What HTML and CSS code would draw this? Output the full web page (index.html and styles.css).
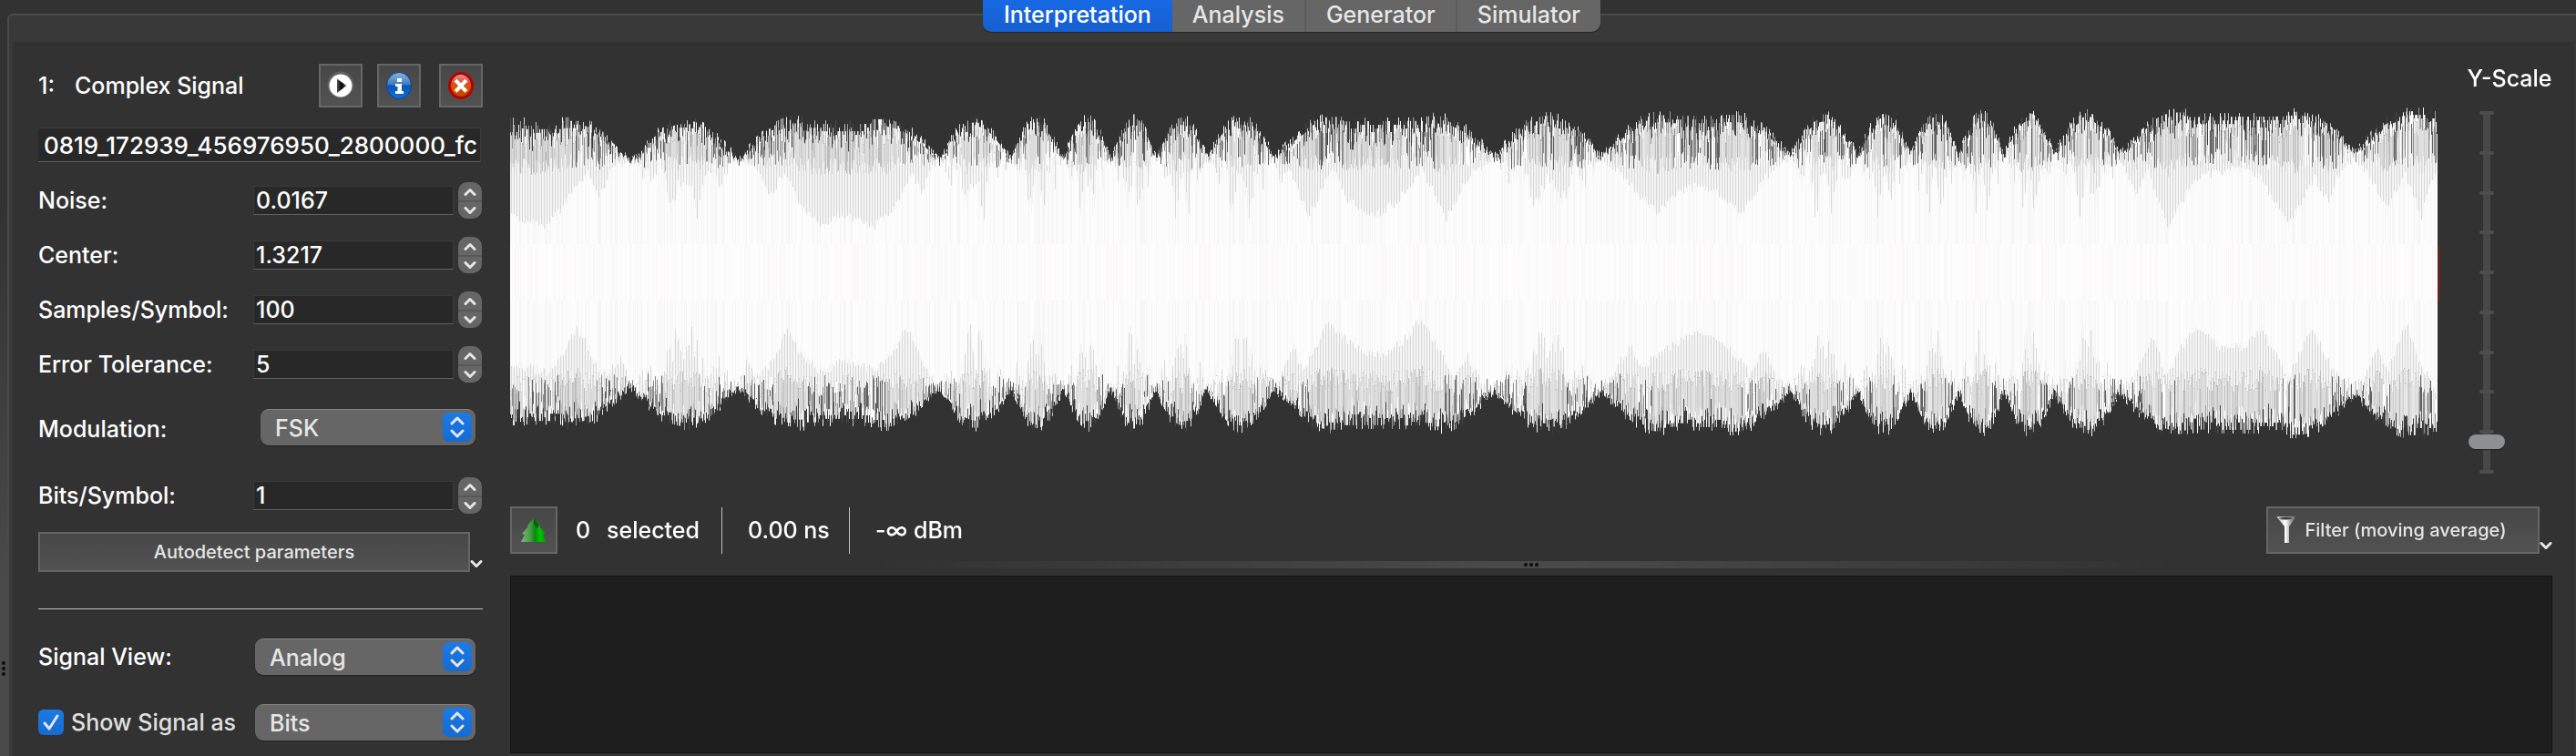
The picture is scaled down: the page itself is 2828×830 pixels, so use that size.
FILE: index.html
```html
<!DOCTYPE html>
<html lang="en">
<head>
<meta charset="utf-8">
<title>Signal interpretation</title>
<link rel="stylesheet" href="styles.css">
</head>
<body>
<div class="window">
  <div class="edge-splitter"><span class="dots dots-vertical"><i></i><i></i><i></i></span></div>
  <div class="workspace">
    <nav class="tabs">
      <button class="tab tab-active">Interpretation</button>
      <button class="tab">Analysis</button>
      <button class="tab tab-divided">Generator</button>
      <button class="tab tab-divided">Simulator</button>
    </nav>
    <div class="pane">
      <div class="content">
        <aside class="params">
          <div class="signal-head">
            <span class="signal-number">1:</span>
            <span class="signal-kind">Complex Signal</span>
            <button class="icon-button" aria-label="Play">
              <svg width="30" height="32" viewBox="0 0 30 32"><defs><linearGradient id="gp"><stop stop-color="#555"/><stop offset=".5" stop-color="#000"/><stop offset="1" stop-color="#777"/></linearGradient></defs><circle cx="15" cy="15" r="14.500" fill="#777" opacity=".5"/><circle cx="15" cy="16" r="12.500" fill="#fff"/><path d="M11 8.500L21.500 16 11 24z" fill="url(#gp)"/></svg>
            </button>
            <button class="icon-button" aria-label="Details">
              <svg width="30" height="32" viewBox="0 0 30 32"><defs><linearGradient id="gi" x2="0" y2="1"><stop stop-color="#8ab4e2"/><stop offset=".45" stop-color="#3f7cc4"/><stop offset=".5" stop-color="#0b56b0"/><stop offset="1" stop-color="#0a6fe0"/></linearGradient></defs><ellipse cx="15" cy="16" rx="13.500" ry="14.500" fill="url(#gi)" stroke="#0b4594"/><path d="M13 8h5v4h-5zM11 14h7v8h2v3h-9v-3h2.500v-5H11z" fill="#fff"/></svg>
            </button>
            <button class="icon-button icon-button-close" aria-label="Close">
              <svg width="30" height="32" viewBox="0 0 30 32"><defs><linearGradient id="gc" x2="0" y2="1"><stop stop-color="#e89a9a"/><stop offset=".4" stop-color="#d0503c"/><stop offset=".5" stop-color="#d85a00"/><stop offset="1" stop-color="#c04000"/></linearGradient></defs><ellipse cx="15" cy="16" rx="12.500" ry="13.500" fill="url(#gc)" stroke="#b80000" stroke-width="3"/><path d="M10.500 11.500l9 9.500M19.500 11.500L10.500 21" stroke="#fff" stroke-width="4" stroke-linecap="square"/></svg>
            </button>
          </div>
          <input class="field filename" type="text" aria-label="Signal name" value="0819_172939_456976950_2800000_fc">
          <div class="row"><label for="noise">Noise:</label><input class="field" id="noise" type="text" value="0.0167"><span class="spinner"><button aria-label="Increase noise"><svg viewBox="0 0 14 8"><path d="M2 7l5-5 5 5"/></svg></button><button aria-label="Decrease noise"><svg viewBox="0 0 14 8"><path d="M2 1l5 5 5-5"/></svg></button></span></div>
          <div class="row"><label for="center">Center:</label><input class="field" id="center" type="text" value="1.3217"><span class="spinner"><button aria-label="Increase center"><svg viewBox="0 0 14 8"><path d="M2 7l5-5 5 5"/></svg></button><button aria-label="Decrease center"><svg viewBox="0 0 14 8"><path d="M2 1l5 5 5-5"/></svg></button></span></div>
          <div class="row"><label for="samples">Samples/Symbol:</label><input class="field" id="samples" type="text" value="100"><span class="spinner"><button aria-label="Increase samples"><svg viewBox="0 0 14 8"><path d="M2 7l5-5 5 5"/></svg></button><button aria-label="Decrease samples"><svg viewBox="0 0 14 8"><path d="M2 1l5 5 5-5"/></svg></button></span></div>
          <div class="row"><label for="tolerance">Error Tolerance:</label><input class="field" id="tolerance" type="text" value="5"><span class="spinner"><button aria-label="Increase tolerance"><svg viewBox="0 0 14 8"><path d="M2 7l5-5 5 5"/></svg></button><button aria-label="Decrease tolerance"><svg viewBox="0 0 14 8"><path d="M2 1l5 5 5-5"/></svg></button></span></div>
          <div class="row row-modulation"><label for="modulation">Modulation:</label><span class="combo combo-inset"><select id="modulation"><option>FSK</option></select><svg class="combo-arrows" viewBox="0 0 32 32"><path d="M10 12l6-6 6 6M10 20l6 6 6-6"/></svg></span></div>
          <div class="row row-bits"><label for="bits">Bits/Symbol:</label><input class="field" id="bits" type="text" value="1"><span class="spinner"><button aria-label="Increase bits"><svg viewBox="0 0 14 8"><path d="M2 7l5-5 5 5"/></svg></button><button aria-label="Decrease bits"><svg viewBox="0 0 14 8"><path d="M2 1l5 5 5-5"/></svg></button></span></div>
          <div class="menu-button menu-button-wide"><button class="push">Autodetect parameters</button><svg class="menu-arrow" viewBox="0 0 14 8"><path d="M2 1l5 5 5-5"/></svg></div>
          <hr class="rule">
          <div class="row row-view"><label for="view">Signal View:</label><span class="combo"><select id="view"><option>Analog</option></select><svg class="combo-arrows" viewBox="0 0 32 32"><path d="M10 12l6-6 6 6M10 20l6 6 6-6"/></svg></span></div>
          <div class="row row-show"><label class="check-label"><span class="check"><input type="checkbox" checked><svg viewBox="0 0 28 28"><path d="M7 15l5 6 9-14"/></svg></span>Show Signal as</label><span class="combo"><select aria-label="Show signal as"><option>Bits</option></select><svg class="combo-arrows" viewBox="0 0 32 32"><path d="M10 12l6-6 6 6M10 20l6 6 6-6"/></svg></span></div>
        </aside>
        <main class="main">
          <div class="plot-row">
            <canvas class="plot" id="plot"></canvas>
            <div class="scale">
              <label for="yscale">Y-Scale</label>
              <div class="slider">
                <span class="ticks"><i></i><i></i><i></i><i></i><i></i><i></i><i></i><i></i><i></i><i></i></span>
                <input id="yscale" type="range" min="0" max="100" value="7">
              </div>
            </div>
          </div>
          <div class="status">
            <button class="icon-button icon-button-tree" aria-label="Show details">
              <svg width="28" height="28" viewBox="0 0 28 28"><defs><linearGradient id="gt"><stop stop-color="#7ab87a"/><stop offset=".35" stop-color="#4a9c4a"/><stop offset=".55" stop-color="#0a8a0a"/><stop offset=".75" stop-color="#00c400"/><stop offset="1" stop-color="#009000"/></linearGradient></defs><path d="M14 1l7 8-1 1 7 8-3 1 4 8H0l4-8-3-1 7-8-1-1z" fill="url(#gt)"/><path d="M14 1l6 8-3 3-3-5z" fill="#0a5a0a"/></svg>
            </button>
            <span class="count">0</span><span class="selected">selected</span>
            <span class="duration">0.00 ns</span>
            <span class="power">-∞ dBm</span>
            <div class="menu-button menu-button-filter"><button class="push"><svg width="24" height="32" viewBox="0 0 24 32"><defs><linearGradient id="gf"><stop stop-color="#aaa"/><stop offset=".45" stop-color="#fff"/><stop offset="1" stop-color="#444"/></linearGradient></defs><path d="M1 1h22l-8 11v18h-5V12z" fill="url(#gf)"/><ellipse cx="12" cy="3" rx="8" ry="1.500" fill="#333" stroke="#999"/></svg>Filter (moving average)</button><svg class="menu-arrow" viewBox="0 0 14 8"><path d="M2 1l5 5 5-5"/></svg></div>
          </div>
          <div class="splitter"><span class="dots"><i></i><i></i><i></i></span></div>
          <textarea class="output" aria-label="Demodulated data"></textarea>
        </main>
      </div>
    </div>
  </div>
</div>
<script src="plot.js"></script>
</body>
</html>
```
FILE: styles.css
```css
* { box-sizing: border-box; }

body {
  margin: 0;
  background: #323232;
  color: #fff;
  font: 500 25px/32px Inter, "Liberation Sans", sans-serif;
}

button, input, select, textarea { font: inherit; color: inherit; margin: 0; }
button { padding: 0; border: 0; background: none; }

.window { display: flex; min-height: 100vh; }

.edge-splitter {
  display: flex;
  width: 8px;
  padding: 726px 0 0 2px;
  background: linear-gradient(#323232 220px, #4a4a4a 640px, #4a4a4a);
}

.dots { display: flex; gap: 2px; height: 4px; }
.dots-vertical { flex-direction: column; height: auto; }
.dots i { width: 4px; height: 4px; border-radius: 2px; background: #0c0c0c; }

.workspace { flex: 1; display: flex; flex-direction: column; min-width: 0; }

.tabs {
  position: relative;
  align-self: center;
  display: flex;
  height: 35px;
  border-radius: 0 0 10px 10px;
  overflow: hidden;
  background: #666;
  box-shadow: 0 1px 1px #222;
}
.tab { padding: 0 22px 4px; color: #e6e6e6; }
.tab-active { padding: 0 23px 4px; color: #fff; background: linear-gradient(#1769e4, #165fd0); }
.tab-divided { border-left: 2px solid #5b5b5b; }

.pane {
  flex: 1;
  display: flex;
  margin-top: -20px;
  padding: 29px 2px 0 4px;
  border: 1px solid #4a4a4a;
  border-width: 2px 0 0 2px;
  border-radius: 6px 0 0 0;
  background: #393939;
}
.content { flex: 1; display: flex; gap: 30px; min-width: 0; padding: 0 24px 3px 28px; background: #323232; }

.params { width: 488px; display: flex; flex-direction: column; }
.signal-head { display: flex; align-items: center; height: 48px; margin-top: 24px; }
.signal-number { width: 40px; }
.signal-kind { flex: 1; }
.icon-button {
  display: grid;
  place-items: center;
  width: 48px;
  height: 48px;
  margin-left: 16px;
  border: 2px solid #666;
  background: linear-gradient(#474747, #525252);
}
.icon-button-close { margin-left: 20px; }

.field {
  min-width: 0;
  height: 32px;
  padding: 0 2px;
  border: 1px solid #3a3a3a;
  border-bottom-color: #606060;
  background: #282828;
  outline: 0;
}
.filename { height: 38px; margin: 22px 2px 22px 0; padding: 0 3px 0 0; border-left: 0; font-size: 26px; text-align: right; }

.row { display: grid; grid-template-columns: 236px 220px 26px; align-items: center; height: 40px; margin-bottom: 20px; }
.row .spinner { margin-left: 5px; }
.row-modulation, .row-view, .row-show { grid-template-columns: 238px 242px; }
.row-modulation { margin: 9px 0 35px; }
.row-modulation label { padding-top: 4px; }
.row-bits { margin-bottom: 20px; }
.row-view { margin-bottom: 32px; }
.row-show { margin-bottom: 0; }

.spinner { display: flex; flex-direction: column; width: 26px; height: 40px; border-radius: 10px; overflow: hidden; background: #666; }
.spinner button { display: grid; place-items: center; height: 20px; }
.spinner button + button { border-top: 2px solid #585858; }
.spinner svg, .menu-arrow { width: 14px; height: 9px; }
.spinner path, .menu-arrow path, .combo-arrows path, .check path { fill: none; stroke: #e6e6e6; stroke-width: 3; stroke-linecap: round; stroke-linejoin: round; }

.combo { position: relative; display: block; height: 40px; }
.combo-inset { margin-left: 6px; }
.combo select {
  appearance: none;
  width: 100%;
  height: 40px;
  padding: 0 44px 0 16px;
  border: 0;
  border-top: 1px solid #828282;
  border-radius: 9px;
  background: #666;
  color: #e6e6e6;
  box-shadow: 0 1px 1px #222;
}
.combo-arrows { position: absolute; right: 4px; top: 4px; width: 32px; height: 32px; border-radius: 7px; background: linear-gradient(#1c7ae6, #156bd0); pointer-events: none; }

.menu-button { display: flex; align-items: flex-end; }
.menu-button-wide { height: 44px; }
.menu-button-wide .push { width: 474px; }
.push {
  display: flex;
  align-items: center;
  justify-content: center;
  align-self: stretch;
  border: 2px solid #666;
  background: linear-gradient(#474747, #525252);
  color: #e6e6e6;
  font-size: 20px;
}
.menu-arrow { flex: none; margin-bottom: 4px; }

.rule { width: 100%; height: 1px; margin: 40px 0 32px; border: 0; background: #c4c4c4; }

.check-label { display: flex; align-items: center; gap: 8px; color: #e0e0e0; white-space: nowrap; }
.check { position: relative; width: 28px; height: 28px; }
.check input { appearance: none; display: block; width: 28px; height: 28px; border-radius: 6px; background: linear-gradient(#1c7ae6, #156bd0); }
.check svg { position: absolute; inset: 0; pointer-events: none; }

.main { flex: 1; display: flex; flex-direction: column; min-width: 0; }
.plot-row { display: flex; justify-content: space-between; height: 510px; padding-top: 24px; }
.plot { flex: 1; min-width: 0; height: 460px; }
.scale { display: flex; flex-direction: column; align-items: center; width: 122px; padding-left: 28px; white-space: nowrap; }
.slider { position: relative; width: 40px; height: 398px; margin: 20px 50px 0 0; background: linear-gradient(#484848, #484848) center / 8px 100% no-repeat; }
.ticks { display: flex; flex-direction: column; justify-content: space-between; align-items: center; height: 398px; }
.ticks i { width: 16px; height: 4px; border-radius: 2px; background: #4d4d4d; }
.slider input { position: absolute; inset: 0; appearance: none; writing-mode: vertical-lr; direction: rtl; width: 40px; height: 398px; background: none; }
.slider input::-webkit-slider-thumb { appearance: none; width: 40px; height: 16px; border-radius: 8px; background: #8e8f91; box-shadow: 0 1px 1px #222; }

.status { display: flex; align-items: center; height: 52px; }
.icon-button-tree { width: 52px; height: 52px; margin: 0; }
.count { width: 34px; margin-left: 20px; }
.selected { width: 126px; }
.duration, .power { height: 51px; padding-left: 28px; border-left: 1px solid #c4c4c4; line-height: 51px; }
.duration { width: 140px; }
.menu-button-filter { height: 52px; margin-left: auto; }
.menu-button-filter .push { width: 300px; gap: 8px; padding-right: 26px; }

.splitter { display: flex; justify-content: center; align-items: center; height: 24px; background: linear-gradient(90deg, transparent 18%, #4a4a4a 48%, #4a4a4a 52%, transparent 82%) center / 100% 8px no-repeat; }
.output { flex: 1; width: 100%; padding: 4px; border: 1px solid #141414; background: #1e1e1e; resize: none; outline: 0; }
```
FILE: plot.js
```js
// Waveform overview: every pixel column gets a spiky outer band, a light
// middle band and a nearly white core. All traces use a 2120 x 460 space.
const VIEW_W = 2120, VIEW_H = 460, LEFT = 560, TOP = 70, MID = 300, END = 2676;

// Columns where the envelope pinches
const pinches = [500, 692, 810, 1031, 1109, 1167, 1219, 1269, 1325, 1399, 1640, 1758,
  1965, 2039, 2097, 2150, 2200, 2255, 2327, 2585, 2740];

// Inner contours of the broad lobes, keyed by the lobe's first pinch
const wide = {
  500: [[560,243,590,250,600,253,615,235,640,200,645,195,655,220,660,215,672,190,692,178],
        [560,395,600,403,615,390,632,355,645,375,655,400,665,405,683,388,692,422]],
  810: [[810,178,830,190,845,220,862,192,880,235,900,252,925,240,960,253,980,235,1000,197,1012,215,1020,195,1031,178],
        [810,422,820,390,830,410,850,390,863,355,880,385,900,403,930,390,960,403,980,380,995,355,1010,385,1020,405,1031,422]],
  1399: [[1399,178,1405,205,1415,190,1436,243,1462,190,1480,225,1508,243,1535,225,1560,190,1588,245,1610,200,1620,190,1640,178],
         [1399,425,1420,375,1430,405,1457,350,1480,370,1500,385,1520,382,1540,370,1559,345,1580,380,1595,408,1610,385,1625,415,1640,425]],
  1758: [[1758,178,1780,195,1800,220,1820,240,1840,215,1867,207,1890,220,1910,240,1930,210,1950,185,1965,178],
         [1758,422,1790,375,1800,400,1820,385,1845,368,1867,360,1890,370,1910,390,1920,405,1936,378,1945,400,1965,428]],
  2327: [[2327,180,2345,218,2357,190,2380,253,2410,200,2445,192,2465,190,2480,198,2512,253,2540,200,2555,225,2570,190,2585,178],
         [2327,425,2345,405,2363,365,2378,408,2395,375,2410,355,2440,378,2465,375,2482,355,2512,410,2537,355,2560,400,2575,415,2585,430]],
  2585: [[2585,178,2600,195,2620,235,2640,195,2658,243,2670,200,2680,190],
         [2585,430,2600,400,2610,375,2620,405,2641,350,2655,390,2668,415,2680,430]]
};
const narrowTop = [-1,178,-.65,212,-.5,190,-.25,243,0,200,.25,243,.5,190,.65,212,1,178];
const narrowBottom = [-1,424,-.7,390,-.5,412,-.12,352,0,385,.15,355,.45,412,.65,390,1,424];

let seed = 7;
function rand() {
  seed = (seed * 16807) % 2147483647;
  return seed / 2147483647;
}

function interpolate(list, x) {
  for (let i = 2; i < list.length; i += 2) {
    if (x <= list[i]) {
      const t = (x - list[i - 2]) / (list[i] - list[i - 2]);
      return list[i - 1] + (list[i + 1] - list[i - 1]) * Math.max(0, t);
    }
  }
  return list[list.length - 1];
}

function pick(colors) {
  return colors[Math.floor(rand() * colors.length)];
}

const spikes = ['#f4f4f4', '#474747', '#c0c0c0', '#dddddd', '#3a3a3a', '#ffffff', '#9a9a9a'];
const greys = ['#dcdcdc', '#dcdcdc', '#e6e6e6', '#bdbdbd', '#d0d0d0'];
const mixed = ['#ffffff', '#8c8c8c', '#dcdcdc', '#606060', '#e0e0e0'];

// Outer band on one side: sparse spikes at the rim, denser strokes below.
// dir is 1 when moving down towards the middle and -1 when moving up.
function band(ctx, x, rim, inside, dir, rise, dense) {
  const length = Math.abs(inside - rim);
  const tip = Math.min(length, (6 + 14 * rand()) * rise);
  const step = rim + dir * tip;
  ctx.fillStyle = spikes[(x * 3 + Math.floor(rand() * 3)) % spikes.length];
  ctx.fillRect(x, Math.min(rim, step), 1, tip);
  ctx.fillStyle = pick(dense ? greys : mixed);
  ctx.fillRect(x, Math.min(step, inside), 1, Math.abs(inside - step) + 1);
}

function draw() {
  const canvas = document.getElementById('plot');
  canvas.width = canvas.clientWidth;
  canvas.height = canvas.clientHeight;
  const ctx = canvas.getContext('2d');
  ctx.scale(canvas.width / VIEW_W, canvas.height / VIEW_H);
  ctx.translate(-LEFT, -TOP);
  seed = 7;
  let lobe = 0;
  for (let x = LEFT; x < END; x++) {
    while (x >= pinches[lobe + 1]) lobe++;
    const a = pinches[lobe], b = pinches[lobe + 1];
    const c = (a + b) / 2, half = (b - a) / 2;
    const growth = (x - LEFT) / (END - LEFT);
    const edge = Math.min(x - a, b - x);
    const rise = Math.sin(Math.PI / 2 * Math.min(1, edge / Math.min(62, half)));
    const sag = half > 80 && edge > 75 ? 5 : 0;
    const low = 124 + 9 * growth;
    const high = 163 + 11 * growth;
    const amp = low + (high - low) * rise - sag;
    const jitter = .5 + rise / 2;
    const top = MID - amp + Math.round((rand() - .5) * 4) * 4 * jitter;
    const bottom = MID + amp - Math.round((rand() - .5) * 4) * 4 * jitter;
    const u = (x - c) / half;
    const inner = wide[a];
    const innerTop = inner ? interpolate(inner[0], x) : interpolate(narrowTop, u);
    const innerBottom = inner ? interpolate(inner[1], x) : interpolate(narrowBottom, u);
    // The middle band swells where the core recedes
    const swellTop = (innerTop - 178) / 75;
    const swellBottom = (424 - innerBottom) / 75;
    const midTop = Math.max(top + 4, 160 + 14 * swellTop + 20 * rand());
    const midBottom = Math.min(bottom - 4, 440 - 14 * swellBottom - 24 * rand());

    band(ctx, x, top, midTop, 1, rise, swellTop > .55);
    band(ctx, x, bottom, midBottom, -1, rise, swellBottom > .45);

    ctx.fillStyle = x % 3 ? '#f4f4f4' : '#d9d9d9';
    ctx.fillRect(x, midTop, 1, midBottom - midTop);
    const ragged = inner ? 10 : 30;
    const coreTop = Math.max(midTop, innerTop - rand() * ragged);
    const coreBottom = Math.min(midBottom, innerBottom + rand() * ragged);
    ctx.fillStyle = pick(['#fdfdfd', '#fbfbfb', '#fcfcfc', '#f6f6f6']);
    ctx.fillRect(x, coreTop, 1, coreBottom - coreTop);
    ctx.fillStyle = pick(['#fefdfd', '#fdfdfd', '#faf8f8']);
    ctx.fillRect(x, 268, 1, 62);
  }
  ctx.fillStyle = '#7c1d1d';
  ctx.fillRect(END, 270, 2, 61);
}

draw();
window.addEventListener('resize', draw);
```
